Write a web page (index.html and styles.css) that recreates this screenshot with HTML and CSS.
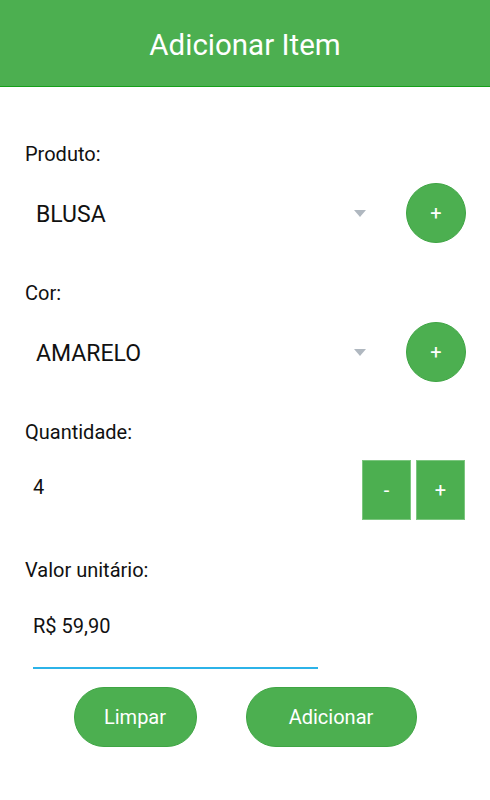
FILE: index.html
```html
<!DOCTYPE html>
<html lang="pt-BR">
<head>
  <meta charset="UTF-8">
  <meta name="viewport" content="width=device-width, initial-scale=1.0">
  <title>Adicionar Item</title>
  <link rel="stylesheet" href="styles.css">
</head>
<body>
  <header class="app-bar">
    <h1>Adicionar Item</h1>
  </header>

  <main class="form">
    <!-- Produto -->
    <label class="field-label first">Produto:</label>
    <div class="spinner-row">
      <div class="spinner">
        <span class="spinner-text">BLUSA</span>
        <span class="spinner-arrow"></span>
      </div>
      <button class="round-btn">+</button>
    </div>

    <!-- Cor -->
    <label class="field-label">Cor:</label>
    <div class="spinner-row">
      <div class="spinner">
        <span class="spinner-text">AMARELO</span>
        <span class="spinner-arrow"></span>
      </div>
      <button class="round-btn">+</button>
    </div>

    <!-- Quantidade -->
    <label class="field-label">Quantidade:</label>
    <div class="qty-row">
      <span class="qty-value">4</span>
      <div class="qty-buttons">
        <button class="square-btn">-</button>
        <button class="square-btn">+</button>
      </div>
    </div>

    <!-- Valor unitário -->
    <label class="field-label">Valor unitário:</label>
    <div class="edit-text">R$ 59,90</div>

    <div class="actions">
      <button class="pill-btn limpar">Limpar</button>
      <button class="pill-btn adicionar">Adicionar</button>
    </div>
  </main>
</body>
</html>
```

FILE: styles.css
```css
body {
  margin: 0;
  font-family: Roboto, "Liberation Sans", sans-serif;
  background-color: #fff;
  color: #111;
}
.app-bar {
  height: 86px;
  background-color: #4caf50;
  border-bottom: 1px solid #16a01a;
  display: flex;
  align-items: center;
  justify-content: center;
}
.app-bar h1 {
  margin: 0;
  padding-top: 4px;
  font-size: 29.5px;
  font-weight: 400;
  color: #fff;
}
.form {
  padding: 0 25px;
}
.field-label {
  display: block;
  margin-top: 38px;
  font-size: 20px;
  line-height: 24px;
}
.field-label.first {
  margin-top: 55px;
}
.spinner-row {
  display: flex;
  align-items: center;
  margin-top: 17px;
  height: 60px;
}
.spinner {
  flex: 1;
  display: flex;
  align-items: center;
  justify-content: space-between;
  padding-left: 11px;
  padding-right: 40px;
}
.spinner-text {
  font-size: 23px;
  padding-top: 2px;
  color: #111;
}
.spinner-arrow {
  width: 0;
  height: 0;
  border-left: 6.5px solid transparent;
  border-right: 6.5px solid transparent;
  border-top: 7px solid #b0b8c0;
  margin-top: 1px;
}
.round-btn {
  width: 60px;
  height: 60px;
  border-radius: 50%;
  border: 1px solid #3fa544;
  background-color: #4caf50;
  color: #fff;
  font-family: inherit;
  font-size: 20px;
  padding: 0;
  margin-right: -1px;
}
.qty-row {
  display: flex;
  justify-content: space-between;
  margin-top: 16px;
  height: 60px;
}
.qty-value {
  margin-top: 15px;
  margin-left: 8px;
  font-size: 20px;
}
.qty-buttons {
  display: flex;
  gap: 5px;
}
.square-btn {
  width: 49px;
  height: 60px;
  border: 1px solid #7cc67f;
  background-color: #4caf50;
  color: #fff;
  font-family: inherit;
  font-size: 20px;
  padding: 0;
}
.edit-text {
  width: 285px;
  margin: 32px 0 0 8px;
  padding-bottom: 29px;
  border-bottom: 2px solid #2cb3e8;
  font-size: 20px;
}
.actions {
  display: flex;
  justify-content: center;
  gap: 49px;
  margin-top: 18px;
}
.pill-btn {
  height: 60px;
  border-radius: 30px;
  border: 1px solid #3fa544;
  background-color: #4caf50;
  color: #fff;
  font-family: inherit;
  font-size: 20px;
  padding: 0;
}
.limpar {
  width: 123px;
}
.adicionar {
  width: 171px;
}
```
